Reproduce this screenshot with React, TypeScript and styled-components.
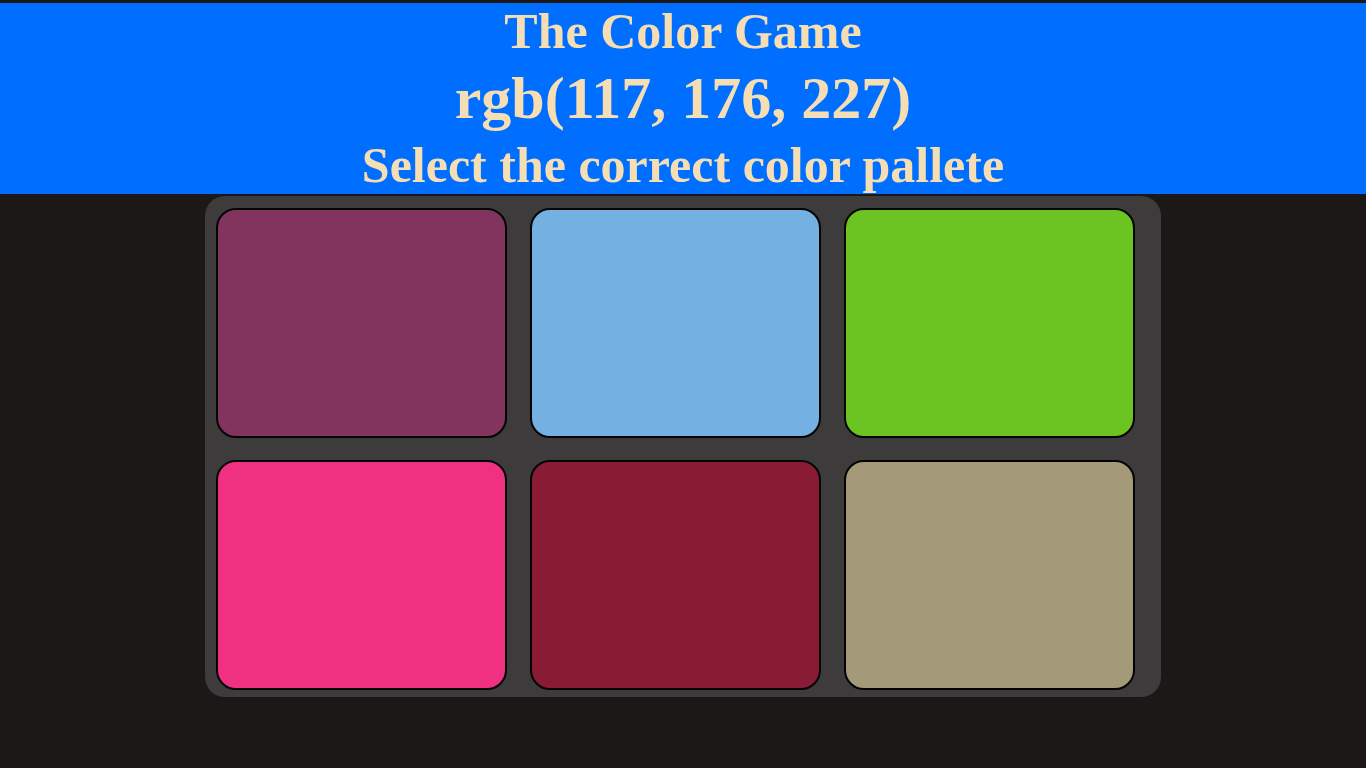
import styled, { createGlobalStyle } from "styled-components";

const GlobalStyle = createGlobalStyle`
  html, body {
    margin: 0;
    padding: 0;
    background-color: #1c1817;
  }
  body {
    padding-top: 3px;
    font-family: "Liberation Serif", "Times New Roman", serif;
  }
`;

const Header = styled.header`
  background-color: #006eff;
  color: #f5deb3;
  text-align: center;
  font-weight: bold;
  height: 191px;
`;

const Line = styled.div<{ $size: number; $height: number; $top?: number }>`
  font-size: ${(p) => p.$size}px;
  line-height: ${(p) => p.$height}px;
  margin-top: ${(p) => p.$top ?? 0}px;
  white-space: nowrap;
`;

const Board = styled.div`
  width: 70%;
  margin: 2px auto 0;
  box-sizing: border-box;
  padding: 12px 0 7px 11px;
  background-color: #3d3b3b;
  border-radius: 20px;
  display: grid;
  grid-template-columns: repeat(3, 291px);
  grid-auto-rows: 230px;
  column-gap: 23px;
  row-gap: 22px;
`;

const Tile = styled.div<{ $color: string }>`
  background-color: ${(p) => p.$color};
  border: 2px solid #050404;
  border-radius: 20px;
  box-sizing: border-box;
  cursor: pointer;
`;

const colors = [
  "rgb(131, 52, 94)",
  "rgb(117, 176, 227)",
  "rgb(107, 196, 33)",
  "rgb(240, 49, 130)",
  "rgb(138, 27, 53)",
  "rgb(164, 154, 122)",
];

const App = () => {
  return (
    <>
      <GlobalStyle />
      <Header>
        <Line $size={50} $height={57}>The Color Game</Line>
        <Line $size={60} $height={69} $top={4}>
          rgb(117, 176, 227)
        </Line>
        <Line $size={50} $height={57} $top={4}>
          Select the correct color pallete
        </Line>
      </Header>
      <Board>
        {colors.map((c) => (
          <Tile key={c} $color={c} />
        ))}
      </Board>
    </>
  );
};

export default App;
